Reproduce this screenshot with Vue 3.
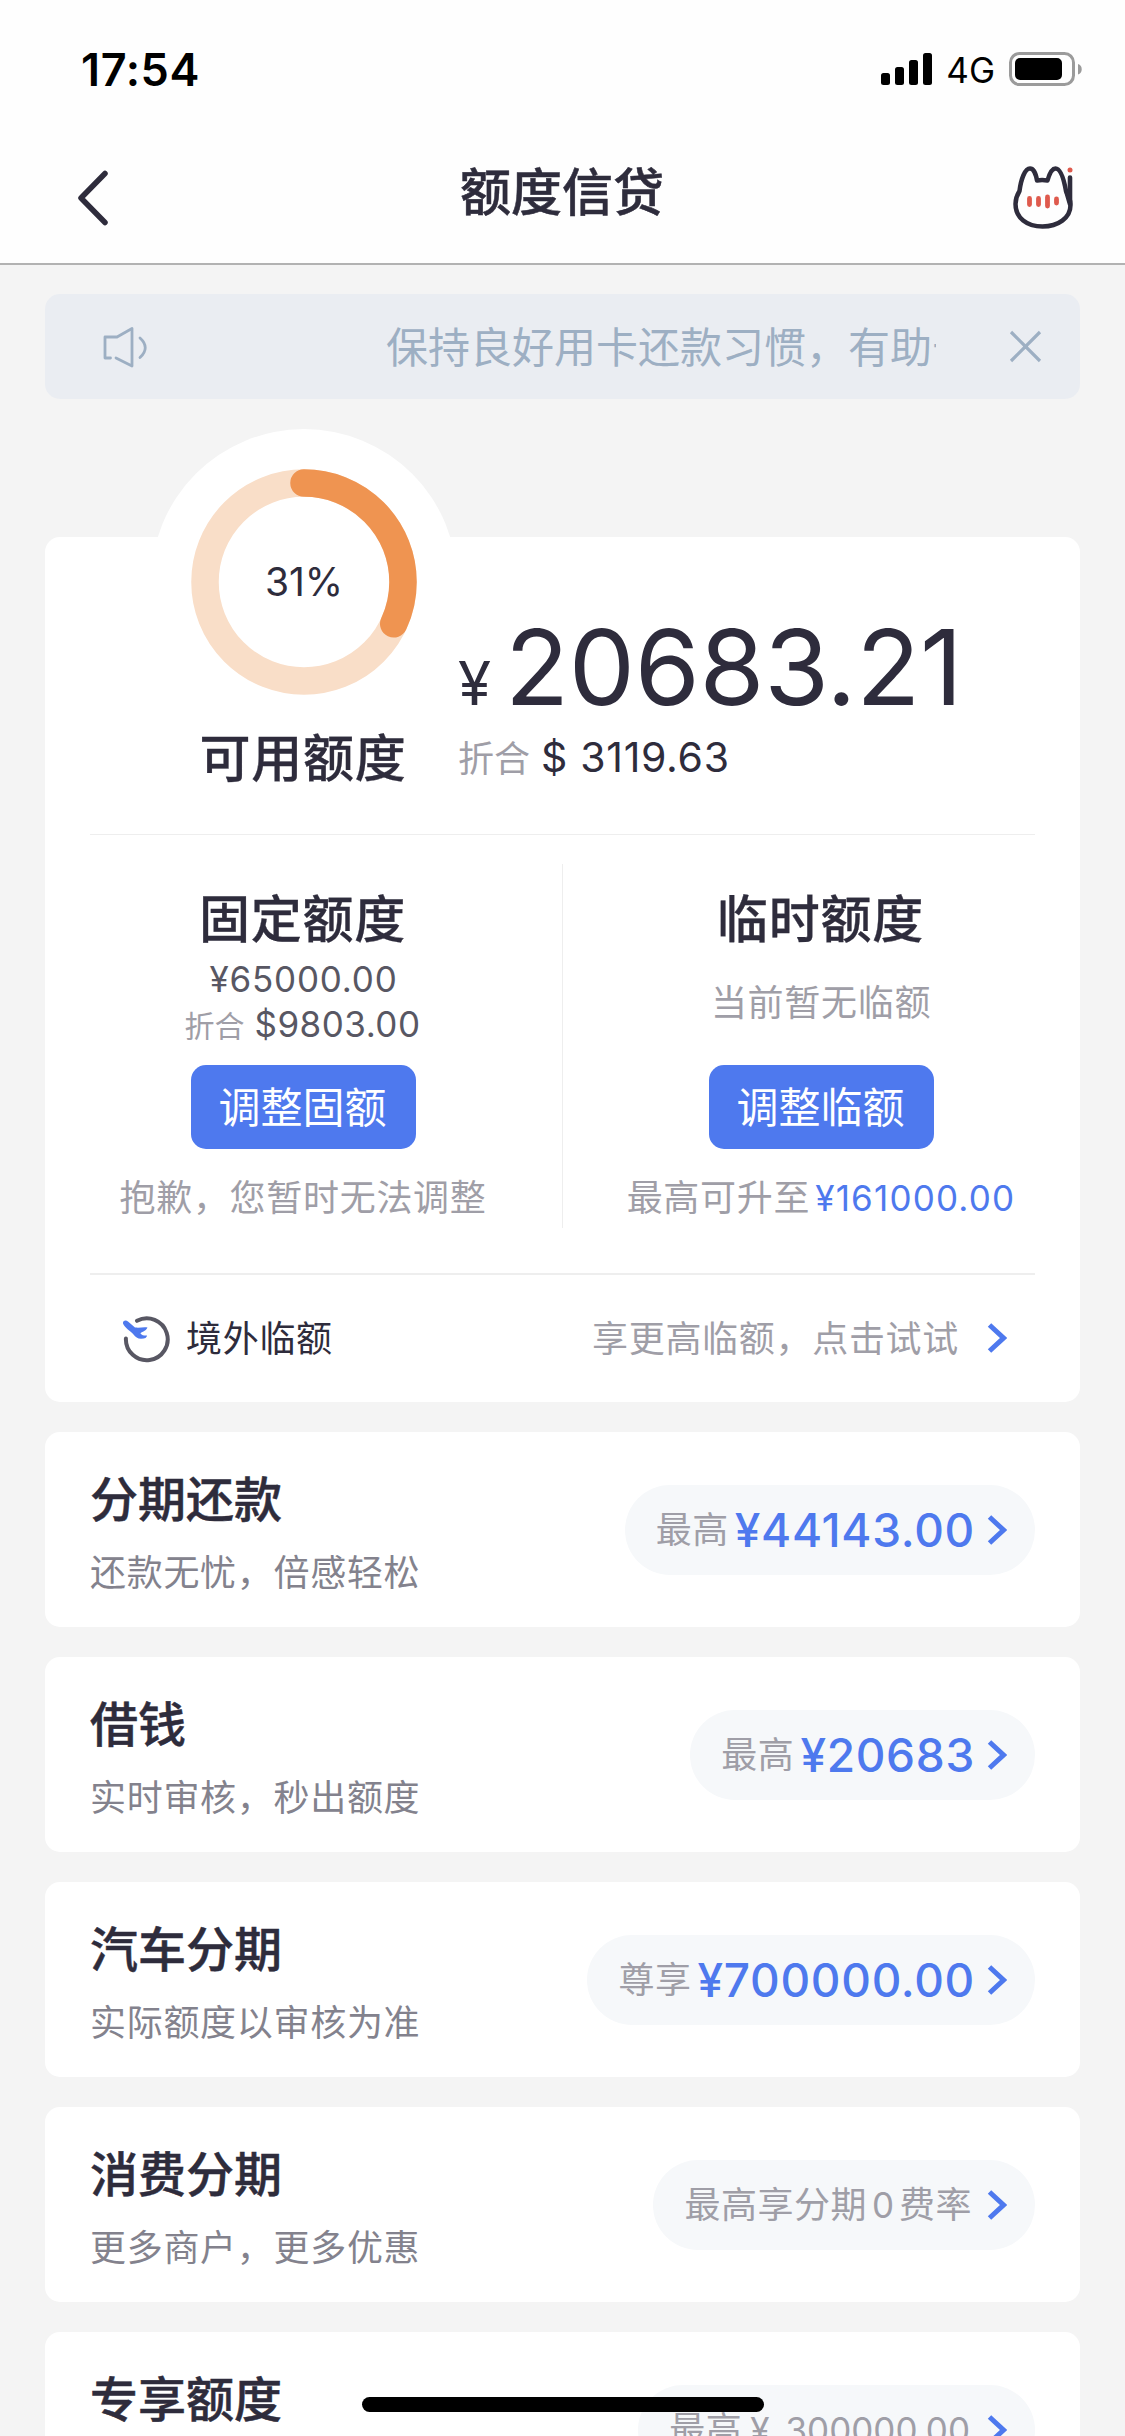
<script setup>
const products = [
  { title: '分期还款', sub: '还款无忧，倍感轻松', label: '最高', value: '¥44143.00' },
  { title: '借钱', sub: '实时审核，秒出额度', label: '最高', value: '¥20683' },
  { title: '汽车分期', sub: '实际额度以审核为准', label: '尊享', value: '¥700000.00' },
  { title: '消费分期', sub: '更多商户，更多优惠', label: '最高享分期', mid: '0', tail: '费率' },
  { title: '专享额度', sub: '专属额度，尊贵礼遇', label: '最高', sign: '¥', amount: '300000.00' },
]
const radius = 99
const circumference = 2 * Math.PI * radius
const arc = circumference * 0.319
</script>

<template>
  <div class="page">
    <header class="top">
      <div class="status">
        <span class="time">17:54</span>
        <svg class="signal" width="52" height="34" viewBox="0 0 52 34">
          <rect x="0" y="21" width="9" height="12" rx="2.5" />
          <rect x="14" y="15" width="9" height="18" rx="2.5" />
          <rect x="28" y="8" width="9" height="25" rx="2.5" />
          <rect x="42" y="1" width="9" height="32" rx="2.5" />
        </svg>
        <span class="net">4G</span>
        <svg class="battery" width="74" height="34" viewBox="0 0 74 34">
          <rect x="1.5" y="1.5" width="63" height="31" rx="9" fill="none" stroke="#9b9b9b" stroke-width="3" />
          <rect x="6" y="6" width="47" height="22" rx="5" fill="#000" />
          <path d="M69 12c5 1.500 5 9 0 10.500z" fill="#9b9b9b" />
        </svg>
      </div>
      <nav class="nav">
        <svg class="back" width="36" height="60" viewBox="0 0 36 60">
          <path d="M30 5.500L6 30L30 54.500" fill="none" stroke="#2e2c3c" stroke-width="5.500" stroke-linecap="round" stroke-linejoin="round" />
        </svg>
        <h1>额度信贷</h1>
        <svg class="cat" width="66" height="68" viewBox="0 0 66 68">
          <path d="M24 19.500Q29 18.500 34.500 19.500C36.500 12.500 39 7.500 42.500 7.500C48 7.500 51 19 53 30C55.500 34 57.500 39 57.500 44C57.500 57 45 65.500 29.500 65.500C14 65.500 2.500 57 2.500 43C2.500 38 4 34 6.500 30C8 18 12 7.500 17 7.500C20.500 7.500 23 13 24 19.500Z" fill="none" stroke="#2e2c3c" stroke-width="4.500" stroke-linejoin="round" />
          <path d="M57 16.500V43L53.500 31" fill="none" stroke="#2e2c3c" stroke-width="4.600" stroke-linecap="round" stroke-linejoin="round" />
          <circle cx="57" cy="9" r="2.500" fill="#df5a4d" />
          <path d="M16.500 37.500V43.500M25.500 37.500V43.500M34.500 36V45M43.500 38V42" stroke="#df5a4d" stroke-width="4.800" stroke-linecap="round" />
        </svg>
      </nav>
    </header>

    <main class="body">
      <section class="notice">
        <svg class="speaker" width="46" height="46" viewBox="0 0 46 46">
          <path d="M8.500 34H3V13H15L30 4.500V42L14 34" fill="none" stroke="#9dafc3" stroke-width="2.800" stroke-linejoin="round" stroke-linecap="round" />
          <path d="M38 14Q48.500 23.500 38 33.500" fill="none" stroke="#9dafc3" stroke-width="2.800" stroke-linecap="round" />
        </svg>
        <div class="marquee">保持良好用卡还款习惯，有助于提升额度</div>
        <svg class="close" width="33" height="33" viewBox="0 0 33 33">
          <path d="M2 2L31 31M31 2L2 31" stroke="#9dafc3" stroke-width="3.200" />
        </svg>
      </section>

      <section class="card quota">
        <div class="halo"></div>
        <div class="summary">
          <div class="gauge">
            <div class="ring">
              <svg width="226" height="226" viewBox="-113 -113 226 226">
                <circle :r="radius" fill="none" stroke="#f9dec8" stroke-width="27.500" />
                <circle :r="radius" fill="none" stroke="#ef9451" stroke-width="27.500" stroke-linecap="round" :stroke-dasharray="`${arc} ${circumference}`" transform="rotate(-90)" />
              </svg>
              <span class="percent">31%</span>
            </div>
            <h2>可用额度</h2>
          </div>
          <div class="total">
            <div class="cny"><span class="sign">¥</span><span class="big">20683.21</span></div>
            <div class="usd"><span class="gray">折合</span><span class="usd-value">$ 3119.63</span></div>
          </div>
        </div>

        <div class="split">
          <div class="col">
            <h2>固定额度</h2>
            <div class="detail">
              <div class="line"><span class="num fixed">¥65000.00</span></div>
              <div class="line"><span class="small">折合</span><span class="num fixed-usd">$9803.00</span></div>
            </div>
            <button>调整固额</button>
            <p class="hint">抱歉，您暂时无法调整</p>
          </div>
          <div class="bar"></div>
          <div class="col">
            <h2>临时额度</h2>
            <div class="detail"><p class="none">当前暂无临额</p></div>
            <button>调整临额</button>
            <p class="hint">最高可升至<span class="up">¥161000.00</span></p>
          </div>
        </div>

        <div class="abroad">
          <svg class="plane" width="50" height="50" viewBox="0 0 50 50">
            <path d="M15 7.800A20.900 20.900 0 1 1 3.900 25.500" fill="none" stroke="#585763" stroke-width="4" stroke-linecap="round" />
            <path d="M1 10.500C0.500 7.500 4 6.500 6 8.500L13 14.500C18 15 21 14 25.500 14.500C24 18.500 18.500 19 18.500 20.500C20 22.800 23 22.500 25 22.500C25 24.500 23 25.800 19 25.800C15.500 25.800 13.500 24 11.500 21.500C9 18.500 2.500 14.500 1 10.500Z" fill="#4e79ee" />
          </svg>
          <span class="abroad-name">境外临额</span>
          <span class="abroad-tip">享更高临额，点击试试</span>
          <svg class="arrow" width="20" height="30" viewBox="0 0 20 30"><path d="M2.500 2L16.500 15L2.500 28" fill="none" stroke="#4e79ee" stroke-width="5" /></svg>
        </div>
      </section>

      <section v-for="p in products" :key="p.title" class="card product">
        <div class="text">
          <h3>{{ p.title }}</h3>
          <p>{{ p.sub }}</p>
        </div>
        <div class="pill">
          <span class="label">{{ p.label }}</span>
          <span v-if="p.value" class="value">{{ p.value }}</span>
          <span v-if="p.mid" class="mid">{{ p.mid }}</span>
          <span v-if="p.tail" class="label">{{ p.tail }}</span>
          <span v-if="p.sign" class="yuan">{{ p.sign }}</span>
          <span v-if="p.amount" class="amount">{{ p.amount }}</span>
          <svg class="arrow" width="20" height="30" viewBox="0 0 20 30"><path d="M2.500 2L16.500 15L2.500 28" fill="none" stroke="#4e79ee" stroke-width="5" /></svg>
        </div>
      </section>
    </main>
    <div class="home"></div>
  </div>
</template>

<style>
html, body { margin: 0; background: #f4f4f4; }
</style>

<style scoped>
.page {
  position: relative;
  width: 1125px;
  height: 2436px;
  overflow: hidden;
  background: #f4f4f4;
  color: #2e2c3c;
  font-family: Inter, "Noto Sans CJK SC", sans-serif;
}
h1, h2, h3, p { margin: 0; font-weight: 500; }
svg { display: block; flex: none; }
span { white-space: nowrap; }
.top { height: 263px; background: #fefefe; border-bottom: 2px solid #b2b2b2; box-sizing: content-box; }
.status { display: flex; align-items: center; height: 138px; padding: 0 42px 0 81px; color: #000; }
.time { flex: 1; font-size: 45px; font-weight: 600; letter-spacing: 0.6px; }
.net { margin: 2px 14px 0 13px; font-size: 35px; }
.nav { display: flex; align-items: center; height: 125px; padding: 0 46px 0 75px; }
.back { margin-top: -5px; }
h1 { flex: 1; text-align: center; font-size: 51px; line-height: 76px; margin: -15px 0 0; -webkit-text-stroke: 0.5px currentColor; }
.cat { margin-top: -12px; }
.body { padding: 29px 45px 0; }
.notice { display: flex; align-items: center; height: 105px; padding: 0 38px 0 57px; border-radius: 15px; background: #eaedf2; box-sizing: border-box; }
.marquee { width: 550px; margin: 2px 0 0 238px; overflow: hidden; white-space: nowrap; font-size: 42px; line-height: 60px; color: #9dafc3; }
.close { margin-left: auto; }
.card { background: #fff; border-radius: 15px; box-sizing: border-box; margin-bottom: 30px; }
.quota { position: relative; height: 865px; margin-top: 138px; padding: 0 45px; }
.halo { position: absolute; left: 106px; top: -108px; width: 306px; height: 306px; border-radius: 50%; background: #fff; }
.summary { position: relative; display: flex; height: 297px; border-bottom: 1px solid #eee; }
.gauge { display: flex; flex-direction: column; align-items: center; width: 226px; margin: -68px 0 0 101px; }
.ring { display: grid; place-items: center; }
.ring > * { grid-area: 1 / 1; }
.percent { font-size: 39px; margin-top: -1px; }
h2 { font-size: 51px; line-height: 70px; letter-spacing: 0.7px; margin-left: -2px; white-space: nowrap; -webkit-text-stroke: 0.3px currentColor; }
.gauge h2 { margin-top: 29px; }
.total { margin: 66px 0 0 41px; }
.cny { display: flex; align-items: baseline; height: 120px; line-height: 128px; }
.sign { width: 47px; font-size: 60px; }
.big { font-size: 105px; letter-spacing: -0.3px; }
.usd { display: flex; align-items: baseline; height: 60px; line-height: 60px; margin-top: 4px; }
.gray { width: 83px; font-size: 36px; color: #9f9ea7; }
.usd-value { font-size: 41px; letter-spacing: 0.7px; }
.split { display: flex; height: 440px; box-sizing: border-box; padding-top: 29px; border-bottom: 2px solid #eee; }
.bar { width: 1px; height: 364px; background: #eee; }
.col { display: flex; flex-direction: column; align-items: center; width: 427px; padding-top: 21px; }
.col:first-child { padding-right: 45px; }
.col:last-child { padding-left: 45px; }
.detail { display: flex; flex-direction: column; align-items: center; height: 95px; margin-top: 2px; }
.line { display: flex; align-items: baseline; height: 45px; line-height: 45px; }
.num { font-size: 35px; letter-spacing: 0.8px; color: #585763; }
.fixed-usd { letter-spacing: 0.5px; margin-right: 2px; }
.small { width: 70px; font-size: 30px; color: #9f9ea7; }
.none, .hint { font-size: 36px; letter-spacing: 0.7px; line-height: 50px; color: #9f9ea7; font-weight: 400; white-space: nowrap; }
.none { margin: 21px 1px 0 0; }
button { width: 225px; height: 84px; margin-top: 13px; flex: none; border: 0; border-radius: 15px; padding: 0 2px 6px 0; background: #4e79ee; color: #fff; font: 400 42px/77px "Noto Sans CJK SC", sans-serif; }
.hint { margin: 24px 1px 0 0; }
.up { margin-left: 5px; color: #4e79ee; font-size: 35px; letter-spacing: 1.2px; }
.abroad { display: flex; align-items: center; height: 126px; padding: 0 28px 0 32px; font-size: 36px; letter-spacing: 0.7px; }
.abroad-name { margin: -4px 0 0 14px; }
.abroad-tip { margin: -4px 0 0 auto; color: #9f9ea7; }
.abroad .arrow { margin-left: 28px; }
.product { display: flex; align-items: flex-start; justify-content: space-between; height: 195px; padding: 0 45px; }
h3 { margin-top: 33px; font-size: 48px; line-height: 70px; -webkit-text-stroke: 0.5px currentColor; }
.text p { margin-top: 13px; font-size: 36px; line-height: 50px; letter-spacing: 0.7px; font-weight: 400; color: #83828d; }
.pill { display: flex; align-items: center; height: 90px; margin-top: 53px; padding: 0 28px 0 31px; border-radius: 45px; background: #f6f8fa; line-height: 90px; }
.label { font-size: 36px; letter-spacing: 0.5px; color: #9f9ea7; }
.value { margin: 0 -3px 0 6px; font-size: 46px; font-weight: 500; letter-spacing: 0.7px; color: #4e79ee; }
.mid { margin: 0 5px; font-size: 35px; color: #9f9ea7; }
.yuan { margin: 0 11px 0 8px; font-size: 35px; color: #9f9ea7; }
.amount { margin: 0 2px 0 5px; font-size: 35px; color: #9f9ea7; }
.pill .arrow { margin-left: 15px; }
.home { position: absolute; left: 362px; top: 2397px; width: 402px; height: 15px; border-radius: 8px; background: #000; }
</style>
